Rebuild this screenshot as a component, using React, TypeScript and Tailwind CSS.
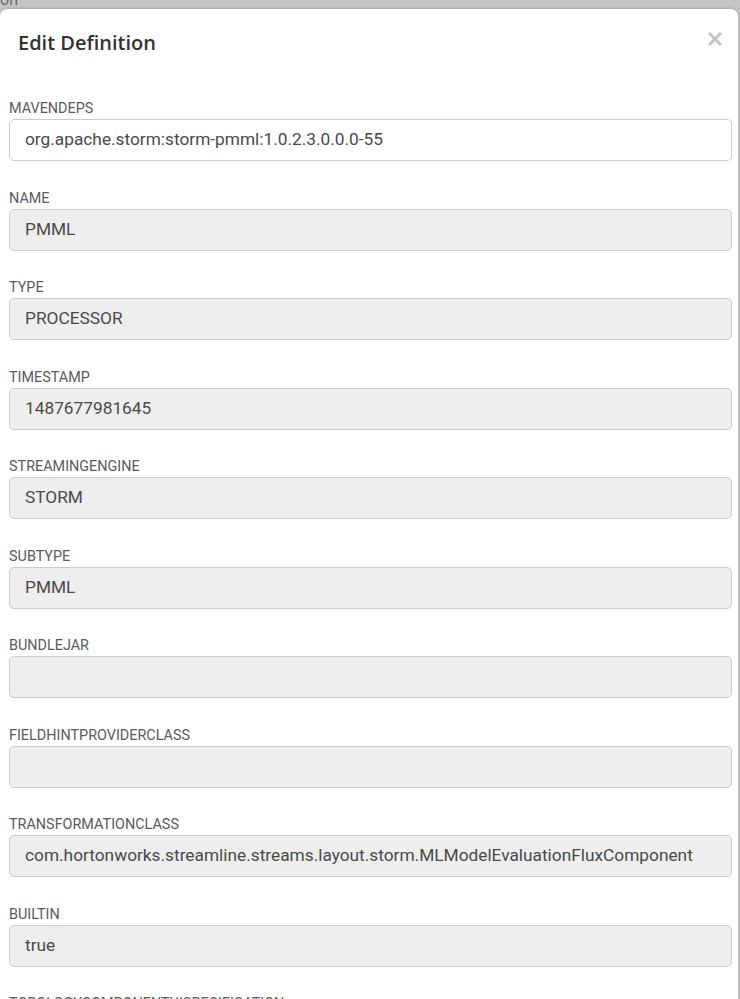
import React from "react"

const fields: { label: string; value: string; editable?: boolean }[] = [
  { label: "MAVENDEPS", value: "org.apache.storm:storm-pmml:1.0.2.3.0.0.0-55", editable: true },
  { label: "NAME", value: "PMML" },
  { label: "TYPE", value: "PROCESSOR" },
  { label: "TIMESTAMP", value: "1487677981645" },
  { label: "STREAMINGENGINE", value: "STORM" },
  { label: "SUBTYPE", value: "PMML" },
  { label: "BUNDLEJAR", value: "" },
  { label: "FIELDHINTPROVIDERCLASS", value: "" },
  { label: "TRANSFORMATIONCLASS", value: "com.hortonworks.streamline.streams.layout.storm.MLModelEvaluationFluxComponent" },
  { label: "BUILTIN", value: "true" },
  { label: "TOPOLOGYCOMPONENTUISPECIFICATION", value: "" },
]

function Field({ label, value, editable }: { label: string; value: string; editable?: boolean }) {
  return (
    <div className="mb-[28.5px]">
      <label className="block text-[14.4px] leading-[17px] mb-[2px] text-[#5b5b5b] font-['Roboto',sans-serif]">{label}</label>
      <div
        className={`h-[42px] flex items-center px-[15px] border border-[#c9ccd3] rounded-[5px] text-[17.3px] text-[#4a4a4a] font-['Roboto',sans-serif] whitespace-nowrap overflow-hidden ${
          editable ? "bg-white" : "bg-[#eeeeee]"
        }`}
      >
        {value}
      </div>
    </div>
  )
}

export default function App() {
  return (
    <div className="h-[999px] w-[740px] overflow-hidden bg-[#c6c6c6]">
      <div className="h-[9px] overflow-hidden relative">
        <span className="absolute left-0 top-[-12px] text-[16px] text-[#6a6a6a] font-['Roboto',sans-serif]">on</span>
      </div>
      <div className="w-[738px] bg-white rounded-t-[7px] shadow-[0_-1px_3px_rgba(0,0,0,0.15)]">
        <div className="flex items-start justify-between pl-[18px] pr-[16px] pt-[20px] h-[81px]">
          <h1 className="text-[20px] leading-[28px] font-semibold text-[#333333] font-['Open_Sans',sans-serif]">
            Edit Definition
          </h1>
          <svg width="14" height="14" viewBox="0 0 14 14" className="mt-[3px]">
            <path d="M2 2 L12 12 M12 2 L2 12" stroke="#c4c4c4" strokeWidth="3" strokeLinecap="square" />
          </svg>
        </div>
        <div className="pl-[9px] pr-[6px] pt-[10px]">
          {fields.map((f) => (
            <Field key={f.label} {...f} />
          ))}
        </div>
      </div>
    </div>
  )
}
